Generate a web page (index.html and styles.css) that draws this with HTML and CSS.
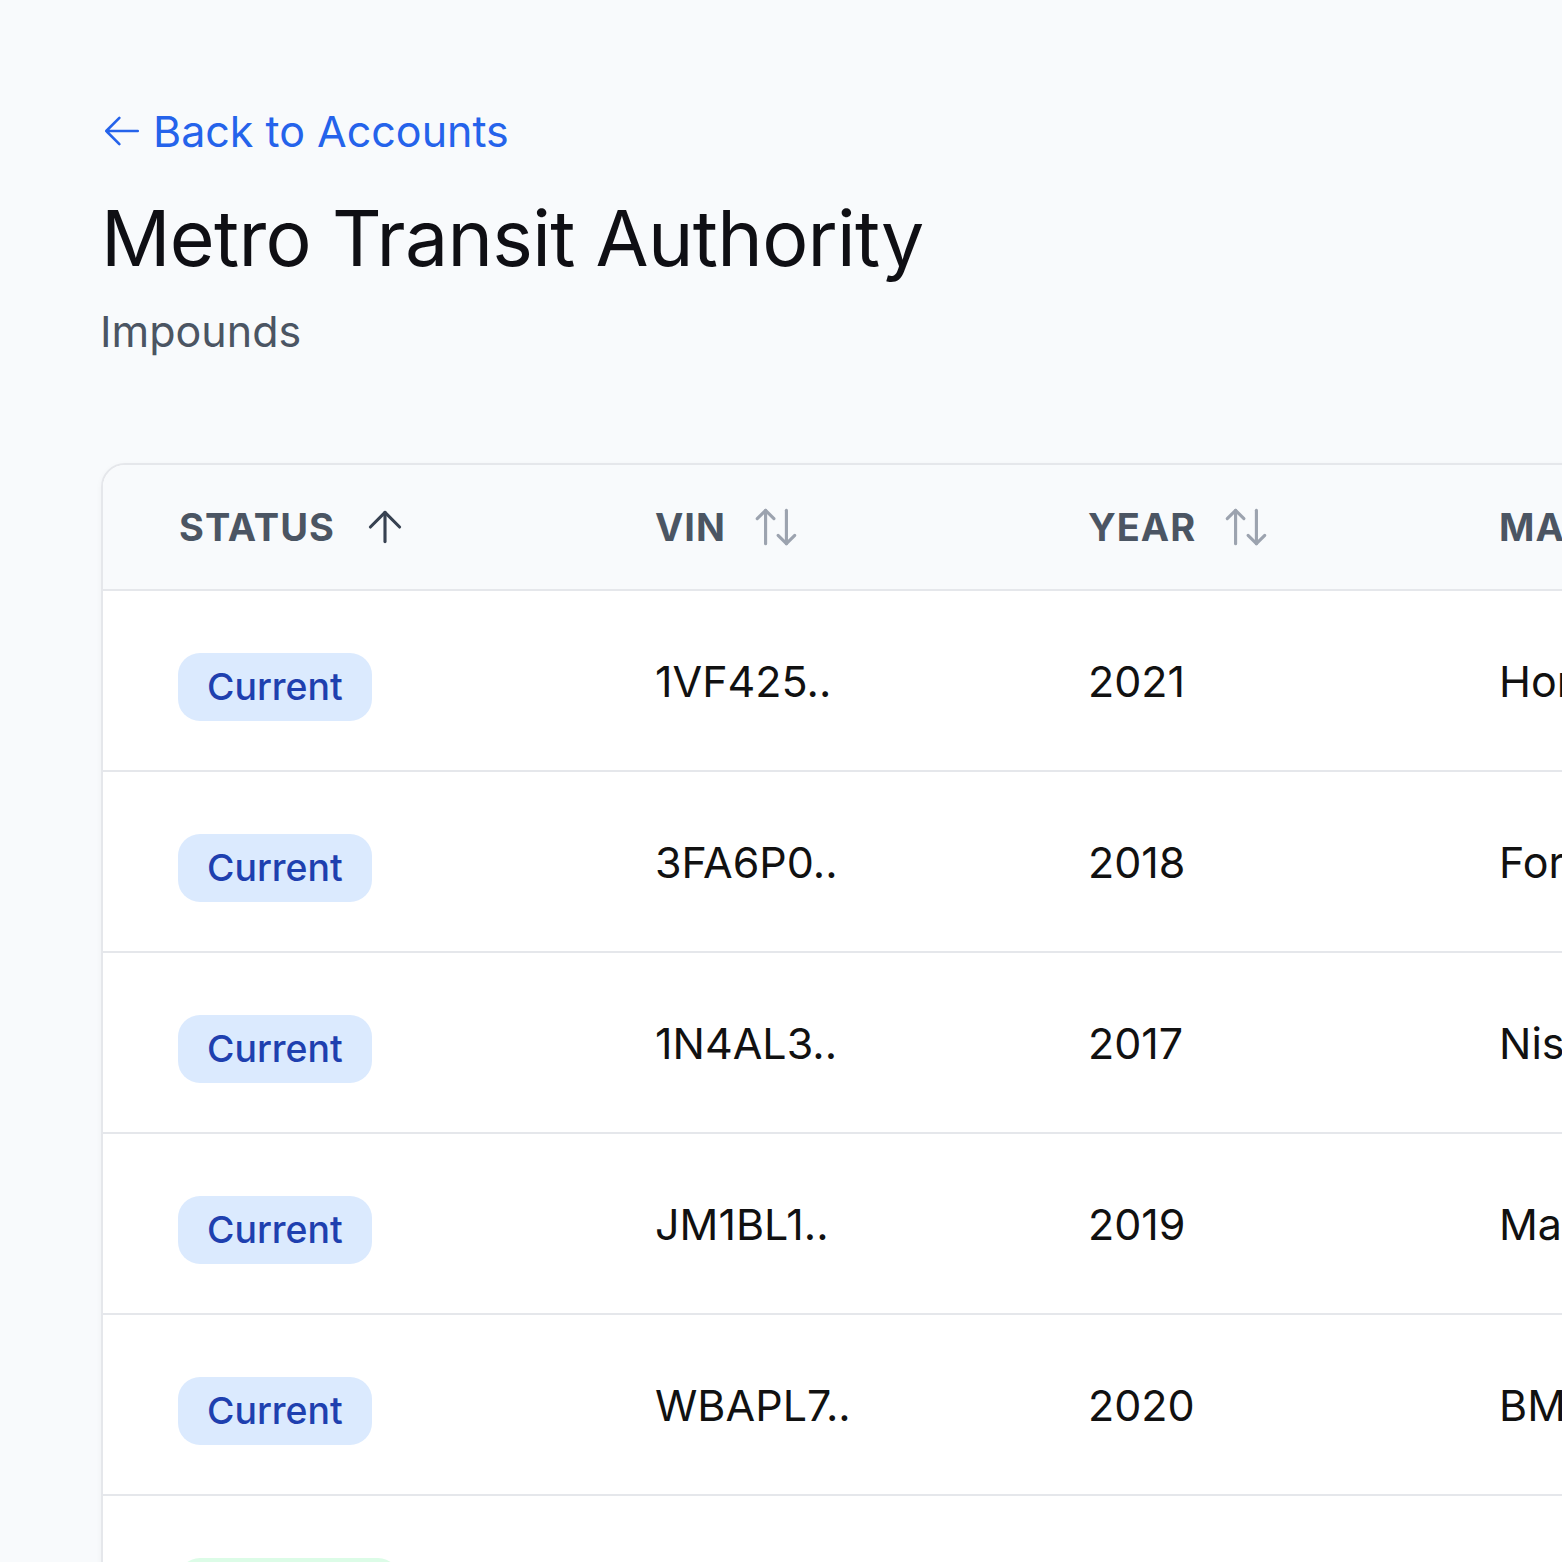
FILE: index.html
```html
<!DOCTYPE html>
<html lang="en">
<head>
<meta charset="utf-8">
<title>Metro Transit Authority – Impounds</title>
<link rel="stylesheet" href="styles.css">
</head>
<body>
<main class="page">
  <a class="back" href="#">
    <svg class="back-icon" viewBox="0 0 24 24" fill="none" stroke="currentColor" stroke-width="1.5" stroke-linecap="round" stroke-linejoin="round"><path d="M10.5 19.5 3 12m0 0 7.5-7.5M3 12h18"/></svg>
    <span>Back to Accounts</span>
  </a>
  <h1 class="title">Metro Transit Authority</h1>
  <p class="subtitle">Impounds</p>

  <div class="card">
    <table class="grid">
      <colgroup>
        <col class="c-status"><col class="c-vin"><col class="c-year"><col class="c-make"><col class="c-model"><col class="c-plate">
      </colgroup>
      <thead>
        <tr>
          <th><span class="th-inner">STATUS <svg class="sort sort-active" viewBox="0 0 24 24" fill="none" stroke="currentColor" stroke-width="1.5" stroke-linecap="round" stroke-linejoin="round"><path d="m5 12 7-7 7 7"/><path d="M12 19V5"/></svg></span></th>
          <th><span class="th-inner">VIN <svg class="sort" viewBox="0 0 24 24" fill="none" stroke="currentColor" stroke-width="1.5" stroke-linecap="round" stroke-linejoin="round"><path d="m21 16-4 4-4-4"/><path d="M17 20V4"/><path d="m3 8 4-4 4 4"/><path d="M7 4v16"/></svg></span></th>
          <th><span class="th-inner">YEAR <svg class="sort" viewBox="0 0 24 24" fill="none" stroke="currentColor" stroke-width="1.5" stroke-linecap="round" stroke-linejoin="round"><path d="m21 16-4 4-4-4"/><path d="M17 20V4"/><path d="m3 8 4-4 4 4"/><path d="M7 4v16"/></svg></span></th>
          <th><span class="th-inner">MAKE <svg class="sort" viewBox="0 0 24 24" fill="none" stroke="currentColor" stroke-width="1.5" stroke-linecap="round" stroke-linejoin="round"><path d="m21 16-4 4-4-4"/><path d="M17 20V4"/><path d="m3 8 4-4 4 4"/><path d="M7 4v16"/></svg></span></th>
          <th><span class="th-inner">MODEL</span></th>
          <th><span class="th-inner">PLATE</span></th>
        </tr>
      </thead>
      <tbody>
        <tr><td><span class="badge badge-blue">Current</span></td><td>1VF425..</td><td>2021</td><td>Honda</td><td>Civic</td><td>7KLM392</td></tr>
        <tr><td><span class="badge badge-blue">Current</span></td><td>3FA6P0..</td><td>2018</td><td>Ford</td><td>Fusion</td><td>8TRX114</td></tr>
        <tr><td><span class="badge badge-blue">Current</span></td><td>1N4AL3..</td><td>2017</td><td>Nissan</td><td>Altima</td><td>6BNQ550</td></tr>
        <tr><td><span class="badge badge-blue">Current</span></td><td>JM1BL1..</td><td>2019</td><td>Mazda</td><td>Mazda3</td><td>5HPD871</td></tr>
        <tr><td><span class="badge badge-blue">Current</span></td><td>WBAPL7..</td><td>2020</td><td>BMW</td><td>330i</td><td>9CWE203</td></tr>
        <tr><td><span class="badge badge-green">Released</span></td><td>2T1BU4..</td><td>2016</td><td>Toyota</td><td>Corolla</td><td>4JZA618</td></tr>
      </tbody>
    </table>
  </div>
</main>
</body>
</html>
```
FILE: styles.css
```css
html, body {
  margin: 0;
  padding: 0;
  overflow: hidden;
  background: #f8fafc;
}

body {
  font-family: Inter, "Noto Sans", "Liberation Sans", sans-serif;
  color: #111827;
}

.page {
  padding: 105px 0 0 103px;
}

.back {
  display: inline-flex;
  align-items: center;
  gap: 10px;
  color: #2563eb;
  text-decoration: none;
  font-size: 43px;
  line-height: 52px;
  margin-left: -2px;
}

.back-icon {
  width: 42px;
  height: 42px;
  flex: none;
}

.title {
  margin: 35px 0 0 -2px;
  font-size: 77px;
  line-height: 92px;
  font-weight: 400;
  letter-spacing: -0.7px;
  color: #0f0f14;
}

.subtitle {
  margin: 21px 0 0 -3px;
  font-size: 43px;
  line-height: 52px;
  color: #4b5563;
}

.card {
  margin: 106px 0 0 -2px;
  width: 2600px;
  background: #ffffff;
  border: 2px solid #e5e7eb;
  border-radius: 24px;
  overflow: hidden;
  box-shadow: 0 2px 6px rgba(15, 23, 42, 0.04);
}

.grid {
  border-collapse: collapse;
  table-layout: fixed;
  width: 100%;
}

.c-status { width: 476px; }
.c-vin { width: 433px; }
.c-year { width: 411px; }
.c-make { width: 420px; }
.c-model { width: 420px; }

thead th {
  background: #f8fafc;
  height: 124px;
  padding: 0 0 0 76px;
  text-align: left;
  border-bottom: 2px solid #e5e7eb;
  font-size: 38px;
  line-height: 46px;
  font-weight: 700;
  letter-spacing: 1px;
  color: #4b5563;
}

.th-inner {
  display: inline-flex;
  align-items: center;
  gap: 25px;
}

.sort {
  width: 50px;
  height: 50px;
  color: #9ca3af;
  flex: none;
}

.sort-active {
  color: #374151;
}

tbody td {
  height: 179px;
  padding: 0 0 0 76px;
  border-bottom: 2px solid #e5e7eb;
  font-size: 43px;
  line-height: 52px;
  color: #111111;
  white-space: nowrap;
}

.badge {
  display: inline-block;
  height: 68px;
  line-height: 68px;
  padding: 0 29px;
  border-radius: 22px;
  font-size: 37.4px;
  font-weight: 500;
  margin-left: -1px;
  vertical-align: middle;
  position: relative;
  top: 6px;
}

.badge-blue {
  background: #dbeafe;
  color: #1e40af;
}

.badge-green {
  background: #dcfce7;
  color: #166534;
}
```
